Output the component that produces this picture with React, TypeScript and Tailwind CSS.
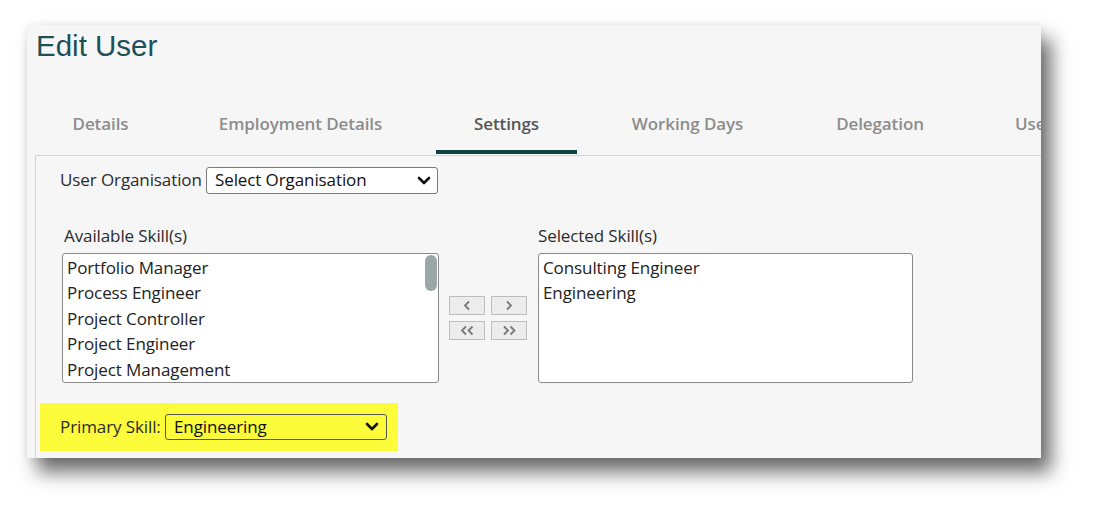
import React from 'react';

const tabs = [
  { label: 'Details', width: 'w-[129px]', active: false },
  { label: 'Employment Details', width: 'w-[239px]', active: false },
  { label: 'Settings', width: 'w-[141px]', active: true },
  { label: 'Working Days', width: 'w-[189px]', active: false },
  { label: 'Delegation', width: 'w-[164px]', active: false },
];

const available = ['Portfolio Manager', 'Process Engineer', 'Project Controller', 'Project Engineer', 'Project Management'];
const selected = ['Consulting Engineer', 'Engineering'];

const Chevron = () => (
  <svg width="14" height="9" viewBox="0 0 14 9" className="shrink-0">
    <path d="M2 2l5 5 5-5" fill="none" stroke="#111" strokeWidth="2.6" strokeLinecap="round" strokeLinejoin="round" />
  </svg>
);

// small arrows used on the move buttons
const Arrow = ({ dir, count }: { dir: 'left' | 'right'; count: 1 | 2 }) => {
  const d = dir === 'left' ? 'M6 1.5L2 5.5 6 9.5' : 'M2 1.5L6 5.5 2 9.5';
  return (
    <svg width={count === 1 ? 8 : 15} height="11" viewBox={count === 1 ? '0 0 8 11' : '0 0 15 11'}>
      <path d={d} fill="none" stroke="#777" strokeWidth="1.8" />
      {count === 2 && <path d={d} transform="translate(6.5 0)" fill="none" stroke="#777" strokeWidth="1.8" />}
    </svg>
  );
};

const MoveButton = ({ dir, count }: { dir: 'left' | 'right'; count: 1 | 2 }) => (
  <button className="w-[36px] h-[19px] bg-[#ececec] border border-[#bdbdbd] flex items-center justify-center">
    <Arrow dir={dir} count={count} />
  </button>
);

const ListBox = ({ items, width, scroll }: { items: string[]; width: string; scroll?: boolean }) => (
  <div className={`relative ${width} h-[130px] bg-white border border-[#8a8a8a] rounded-[3px] overflow-hidden`}>
    <ul className="pl-[4px] pt-[1px]">
      {items.map((item) => (
        <li key={item} className="leading-[25.5px] text-[#222] whitespace-nowrap">
          {item}
        </li>
      ))}
    </ul>
    {scroll && <div className="absolute right-[1px] top-[1px] w-[12px] h-[36px] rounded-full bg-[#9aa7a7]" />}
  </div>
);

export default function App() {
  return (
    <div className="w-[1097px] h-[514px] bg-white overflow-hidden pt-[25px] pl-[27px] font-['Open_Sans',sans-serif] text-[17px] tracking-[-0.1px]">
      <div className="w-[1014px] h-[433px] bg-[#f6f6f6] pl-[8px] pt-[6px] flex flex-col overflow-hidden shadow-[10px_14px_18px_rgba(0,0,0,0.58),0_0_7px_rgba(0,0,0,0.08)]">
        {/* Title */}
        <h1 className="text-[29.5px] leading-none pl-[1px] tracking-normal text-[#1e5057] font-['Liberation_Sans',Arial,sans-serif]">
          Edit User
        </h1>

        {/* Tabs */}
        <div className="mt-[51px] flex gap-4 pl-[1px] border-b border-[#d4d4d4]">
          {tabs.map((t) => (
            <div
              key={t.label}
              className={`${t.width} shrink-0 text-center whitespace-nowrap leading-6 pb-[14px] mb-[1px] font-semibold border-b-4 ${
                t.active ? 'border-[#0f4446] text-[#555555]' : 'border-transparent text-[#8c8c8c]'
              }`}
            >
              {t.label}
            </div>
          ))}
          <div className="shrink-0 whitespace-nowrap leading-6 pl-[37px] pb-[14px] mb-[1px] font-semibold border-b-4 border-transparent text-[#8c8c8c]">
            User Roles
          </div>
        </div>

        {/* Settings content */}
        <div className="flex-1 border-l border-[#d4d4d4] text-[#2b2b2b]">
          <div className="mt-[11px] pl-[24px] flex items-center h-[27px]">
            <span className="w-[146px] shrink-0 whitespace-nowrap">User Organisation</span>
            <div className="w-[232px] h-[27px] bg-white border border-[#7a7a7a] rounded-[3px] flex items-center justify-between pl-[8px] pr-[6px]">
              <span className="text-[#111]">Select Organisation</span>
              <Chevron />
            </div>
          </div>

          <div className="mt-[32px] pl-[26px] flex items-end">
            <div>
              <div className="pl-[2px] leading-5 mb-[7px]">Available Skill(s)</div>
              <ListBox items={available} width="w-[377px]" scroll />
            </div>
            <div className="h-[130px] ml-[10px] flex items-center">
              <div className="grid grid-cols-2 gap-[6px]">
                <MoveButton dir="left" count={1} />
                <MoveButton dir="right" count={1} />
                <MoveButton dir="left" count={2} />
                <MoveButton dir="right" count={2} />
              </div>
            </div>
            <div className="ml-[11px]">
              <div className="leading-5 mb-[7px]">Selected Skill(s)</div>
              <ListBox items={selected} width="w-[375px]" />
            </div>
          </div>

          <div className="mt-[20px] ml-[4px] w-[358px] h-[48px] bg-[#fcfc3b] flex items-center pl-[20px]">
            <span className="w-[105px] shrink-0 whitespace-nowrap">Primary Skill:</span>
            <div className="w-[222px] h-[26px] border border-[#555] rounded-[3px] flex items-center justify-between pl-[8px] pr-[7px]">
              <span className="text-[#111]">Engineering</span>
              <Chevron />
            </div>
          </div>
        </div>
      </div>
    </div>
  );
}
